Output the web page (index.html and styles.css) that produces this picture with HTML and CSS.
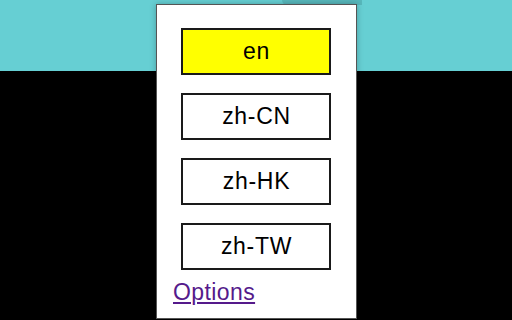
FILE: index.html
```html
<!DOCTYPE html>
<html>
<head>
<meta charset="utf-8">
<link rel="stylesheet" href="styles.css">
</head>
<body>
<div class="page">
  <div class="tab-shadow"></div>
  <div class="popup">
    <div class="langs">
      <button class="lang active">en</button>
      <button class="lang">zh-CN</button>
      <button class="lang">zh-HK</button>
      <button class="lang">zh-TW</button>
    </div>
    <a class="options" href="#">Options</a>
  </div>
</div>
</body>
</html>
```
FILE: styles.css
```css
html, body {
  margin: 0;
  padding: 0;
  width: 512px;
  height: 320px;
  overflow: hidden;
}
.page {
  position: relative;
  width: 512px;
  height: 320px;
  background: linear-gradient(to bottom, #66cfd3 0, #66cfd3 71px, #000 71px, #000 100%);
  padding-top: 4px;
  box-sizing: border-box;
}
.tab-shadow {
  position: absolute;
  left: 282px;
  top: 0;
  width: 80px;
  height: 5px;
  background: #57b7bb;
  border-radius: 0 0 0 6px;
}
.popup {
  position: relative;
  margin-left: 156px;
  width: 199px;
  height: 313px;
  background: #fff;
  border: 1px solid #555;
  box-shadow: 0 0 6px rgba(0, 0, 0, 0.25);
  display: flex;
  flex-direction: column;
  font-family: "Liberation Sans", Arial, sans-serif;
}
.langs {
  display: flex;
  flex-direction: column;
  gap: 18px;
  padding: 23px 0 0 24px;
}
.lang {
  width: 150px;
  height: 47px;
  box-sizing: border-box;
  border: 2px solid #1a1a1a;
  background: #fff;
  color: #000;
  font-family: "Liberation Sans", Arial, sans-serif;
  font-size: 23px;
  letter-spacing: 0.7px;
  padding: 0 0 0 1px;
  margin: 0;
}
.lang.active {
  background: #ffff00;
}
.options {
  margin: 9px 0 0 16px;
  font-size: 23px;
  letter-spacing: 0.4px;
  color: #551a8b;
  text-decoration: underline;
  align-self: flex-start;
}
```
